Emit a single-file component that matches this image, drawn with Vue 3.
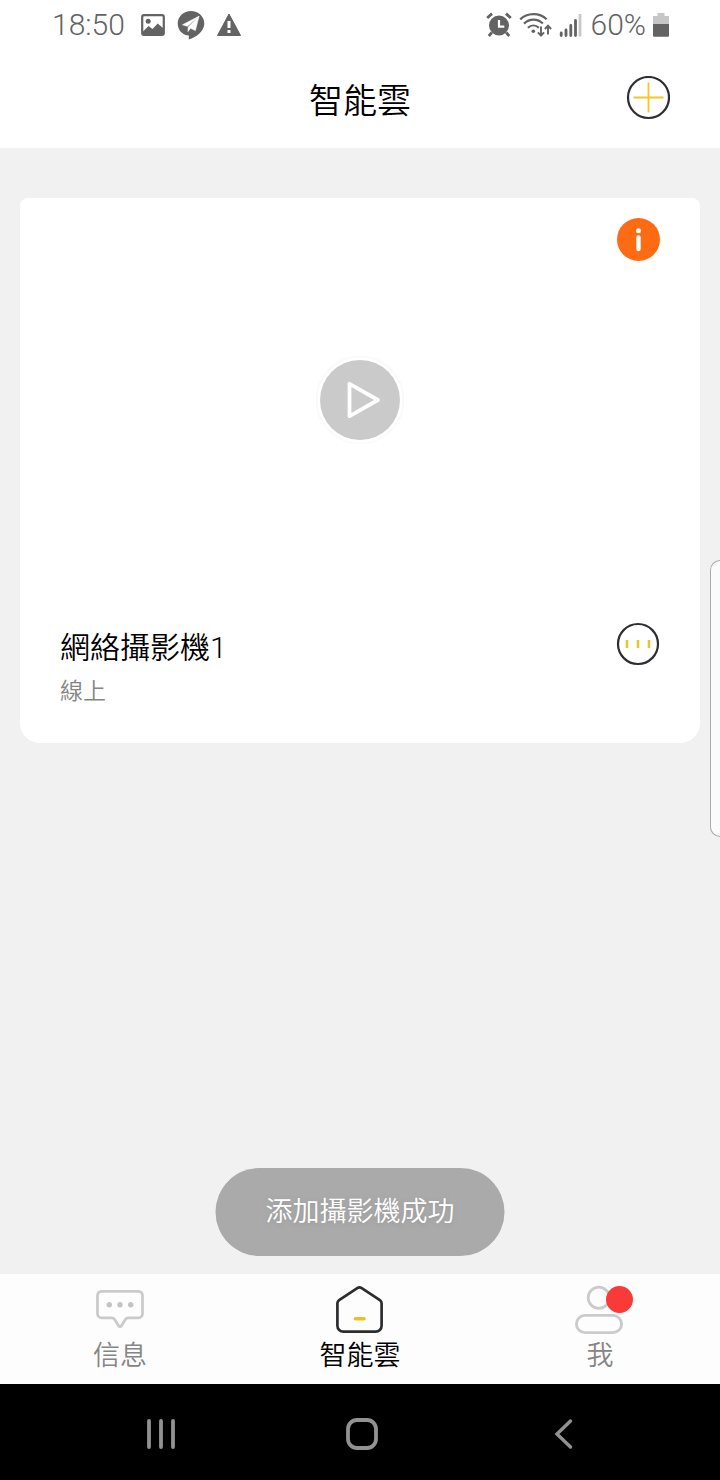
<script setup>
import { ref } from 'vue'

const cameras = ref([{ id: 1, name: '網絡攝影機1', status: '線上' }])
const active = ref('home')
const tabs = [
  { id: 'messages', label: '信息' },
  { id: 'home', label: '智能雲' },
  { id: 'me', label: '我' }
]
</script>

<template>
  <div class="screen">
    <div class="status-bar">
      <div class="status-group">
        <span class="status-text">18:50</span>
        <svg class="picture" width="24" height="22" viewBox="0 0 24 22" aria-hidden="true">
          <rect x="1.2" y="1.2" width="21.6" height="19.6" rx="1.8" fill="none" stroke="#636363" stroke-width="2.2" />
          <circle cx="7.2" cy="7.3" r="2.5" fill="#636363" />
          <path d="M2 17.5 7.5 12l4 3 5.2-5.4L22 14v7H2z" fill="#636363" />
        </svg>
        <svg width="28" height="30" viewBox="0 0 28 30" aria-hidden="true">
          <path d="M14 1C6.8 1 .7 6.4.7 13.4c0 6.600 5 11.700 11.100 12.200v3.800c7.800-2.300 15.500-8.500 15.500-16C27.300 6.400 21.200 1 14 1z" fill="#636363" />
          <path d="M22 6.200 5.500 14.800l4.800 1.500zM22 6.200 11.300 17l-.4 4.600 2.700-3.300 4.800 2.200z" fill="#fff" stroke="#fff" stroke-width=".6" />
        </svg>
        <svg width="26" height="24" viewBox="0 0 26 24" aria-hidden="true">
          <path d="M12 1 23.500 22.500h-23z" fill="#636363" stroke="#636363" stroke-width="1" stroke-linejoin="round" />
          <path d="M10.500 8h3v7h-3zM10.500 17h3v3h-3z" fill="#fff" />
        </svg>
      </div>
      <div class="status-group right">
        <svg width="26" height="26" viewBox="0 0 26 26" aria-hidden="true">
          <circle cx="13" cy="13.500" r="10" fill="#636363" />
          <path d="M1.200 6 6 1.600M24.800 6 20 1.600" stroke="#636363" stroke-width="2.800" />
          <path d="m5.800 20.500-3 3.500M20.200 20.500l3 3.500" stroke="#636363" stroke-width="2.800" />
          <path d="M13 8v6.600h5.300" fill="none" stroke="#fff" stroke-width="2.200" />
        </svg>
        <svg width="33" height="26" viewBox="0 0 33 26" aria-hidden="true">
          <g fill="none" stroke="#636363" stroke-width="2.200">
            <path d="M1.200 7.400C8 .6 20.500.3 27.600 7.300" />
            <path d="M5 11.600C10.500 6.300 18.500 6.200 23.900 11.500" />
            <path d="M8.900 15.800c3.300-3.100 7.700-3.100 11 0" />
          </g>
          <circle cx="14.300" cy="19.200" r="1.800" fill="#636363" />
          <path d="M22 14.500v9M18.900 20.300l3.100 3.300 3.100-3.300M29 22.500v-8.800M25.900 17l3.100-3.300 3.100 3.300" fill="none" stroke="#636363" stroke-width="1.900" />
        </svg>
        <svg width="23" height="26" viewBox="0 0 23 26" aria-hidden="true">
          <path d="M2.200 21v2.600M7 18v5.600M11.800 13.500v10.100M16.500 8.500v15.100" stroke="#636363" stroke-width="2.800" stroke-linecap="round" />
          <path d="M21 2v22.500" stroke="#c8c8c8" stroke-width="2.800" />
        </svg>
        <span class="status-text battery-level">60%</span>
        <svg width="16" height="24" viewBox="0 0 16 24" aria-hidden="true">
          <path d="M4.500 0h7v3H16v9H0V3h4.500z" fill="#c6c6c6" />
          <path d="M0 11h16v11.500a1.200 1.200 0 0 1-1.200 1.200H1.200A1.200 1.200 0 0 1 0 22.500z" fill="#636363" />
        </svg>
      </div>
    </div>

    <header class="header">
      <h1>智能雲</h1>
      <button class="icon-button" type="button" aria-label="新增裝置">
        <svg width="44" height="44" viewBox="0 0 44 44">
          <circle cx="22.500" cy="21.500" r="20.500" fill="none" stroke="#2e2e33" stroke-width="2.200" />
          <path d="M7.500 21.500h30M22.500 6.500v30" stroke="#f0c929" stroke-width="1.800" />
        </svg>
      </button>
    </header>

    <main class="content">
      <article v-for="camera in cameras" :key="camera.id" class="card">
        <div class="preview">
          <button class="icon-button info" type="button" aria-label="裝置資訊">
            <svg width="44" height="44" viewBox="0 0 44 44">
              <circle cx="22.500" cy="21.500" r="21.500" fill="#ff6b12" />
              <circle cx="22.500" cy="12.800" r="2.500" fill="#fff" />
              <path d="M22.500 19.500v11.500" stroke="#fff" stroke-width="4.400" stroke-linecap="round" />
            </svg>
          </button>
          <button class="icon-button" type="button" aria-label="播放">
            <svg width="90" height="90" viewBox="0 0 90 90">
              <circle cx="45" cy="45" r="43.500" fill="#fff" stroke="#f9f9f9" stroke-width="1.500" />
              <circle cx="45" cy="45" r="40" fill="#cacaca" />
              <path d="M34.500 28.800v32.400L63 45z" fill="none" stroke="#fff" stroke-width="3.800" stroke-linejoin="round" />
            </svg>
          </button>
        </div>
        <div class="details">
          <div>
            <h2>{{ camera.name }}</h2>
            <p>{{ camera.status }}</p>
          </div>
          <button class="icon-button" type="button" aria-label="更多">
            <svg width="44" height="44" viewBox="0 0 44 44">
              <circle cx="22" cy="22" r="20" fill="none" stroke="#2e2e33" stroke-width="2.200" />
              <path d="M11 18v8M22 18v8M33 18v8" stroke="#e6c72c" stroke-width="2.600" />
            </svg>
          </button>
        </div>
      </article>
      <div class="toast" role="status">添加攝影機成功</div>
    </main>

    <nav class="tabs">
      <button
        v-for="tab in tabs"
        :key="tab.id"
        type="button"
        class="tab"
        :class="{ active: active === tab.id }"
        @click="active = tab.id"
      >
        <svg v-if="tab.id === 'messages'" width="48" height="48" viewBox="0 0 48 48" fill="none" aria-hidden="true">
          <path d="M5.500 5.300h37a4 4 0 0 1 4 4v18.500a4 4 0 0 1-4 4H32.300c-1.500 0-2.200.6-3 1.800l-4 6.400a1.600 1.600 0 0 1-2.600 0l-4-6.400c-.8-1.200-1.500-1.800-3-1.800H5.500a4 4 0 0 1-4-4V9.300a4 4 0 0 1 4-4z" stroke="#cbcbcb" stroke-width="2.800" />
          <g fill="#c4c4c4">
            <circle cx="13.300" cy="18.800" r="2.700" />
            <circle cx="24" cy="18.800" r="2.700" />
            <circle cx="34.700" cy="18.800" r="2.700" />
          </g>
        </svg>
        <svg v-else-if="tab.id === 'home'" width="48" height="48" viewBox="0 0 48 48" fill="none" aria-hidden="true">
          <path d="M21.300 2.100a4 4 0 0 1 4.400 0l18.200 12a4 4 0 0 1 1.700 3.300v22.300a6 6 0 0 1-6 6H7.400a6 6 0 0 1-6-6V17.400a4 4 0 0 1 1.700-3.300z" stroke="#2d2d30" stroke-width="2.700" />
          <path d="M19.500 32.700h8.500" stroke="#f2bd24" stroke-width="3.600" stroke-linecap="round" />
        </svg>
        <svg v-else width="60" height="48" viewBox="0 0 60 48" fill="none" overflow="visible" aria-hidden="true">
          <g stroke="#cbcbcb" stroke-width="2.800">
            <circle cx="28.800" cy="11.700" r="10.600" />
            <rect x="6.400" y="29.400" width="45.200" height="17.200" rx="8.600" />
          </g>
          <circle cx="49.500" cy="13.500" r="13.500" fill="#f93a37" />
        </svg>
        <span>{{ tab.label }}</span>
      </button>
    </nav>

    <div class="system-nav">
      <button class="icon-button" type="button" aria-label="最近使用">
        <svg width="32" height="34" viewBox="0 0 32 34">
          <path d="M4 4v26M16 4v26M28 4v26" stroke="#929292" stroke-width="3.800" stroke-linecap="round" />
        </svg>
      </button>
      <button class="icon-button" type="button" aria-label="主畫面">
        <svg width="34" height="34" viewBox="0 0 34 34">
          <rect x="3" y="3" width="28" height="28" rx="9" fill="none" stroke="#929292" stroke-width="3.800" />
        </svg>
      </button>
      <button class="icon-button" type="button" aria-label="返回">
        <svg width="20" height="34" viewBox="0 0 20 34">
          <path d="M17.500 4 4 17l13.500 13" fill="none" stroke="#929292" stroke-width="3.400" stroke-linecap="round" />
        </svg>
      </button>
    </div>

    <div class="edge-handle"></div>
  </div>
</template>

<style scoped>
.screen {
  position: relative;
  display: flex;
  flex-direction: column;
  min-height: 100vh;
  overflow: hidden;
  background: #f1f1f1;
  color: #000;
  font-family: Roboto, "Noto Sans CJK TC", sans-serif;
  font-weight: 350;
}

h1,
h2,
p {
  margin: 0;
  font-weight: 350;
}

svg {
  display: block;
  flex: none;
}

button {
  padding: 0;
  border: 0;
  background: none;
  color: inherit;
  font: inherit;
  cursor: pointer;
}

.icon-button {
  display: block;
}

.status-bar {
  display: flex;
  justify-content: space-between;
  align-items: center;
  height: 50px;
  padding: 0 51px 0 52px;
  background: #fff;
  color: #636363;
}

.status-group {
  display: flex;
  align-items: center;
  gap: 12px;
}

.status-group.right {
  gap: 7px;
}

.status-group svg {
  margin-bottom: 1px;
}

.status-group .picture {
  margin-left: 4px;
}

.status-text {
  font-size: 30px;
  line-height: 50px;
}

.battery-level {
  padding-left: 2px;
}

.header {
  display: grid;
  grid-template-columns: 1fr auto 1fr;
  align-items: center;
  height: 98px;
  padding: 0 50px 3px;
  box-sizing: border-box;
  background: #fff;
}

.header h1 {
  grid-column: 2;
  padding-top: 6px;
  font-size: 34px;
  line-height: 50px;
}

.header .icon-button {
  justify-self: end;
}

.content {
  position: relative;
  flex: 1;
  padding: 50px 20px 18px;
}

.card {
  border-radius: 8px 8px 20px 20px;
  background: #fff;
}

.preview {
  position: relative;
  display: grid;
  place-items: center;
  height: 404px;
}

.info {
  position: absolute;
  top: 20px;
  right: 40px;
}

.details {
  display: flex;
  justify-content: space-between;
  align-items: flex-start;
  padding: 20px 40px 29px;
}

.details h2 {
  padding-top: 4px;
  font-size: 30px;
  line-height: 44px;
}

.details p {
  color: #858585;
  font-size: 23px;
  line-height: 44px;
}

.toast {
  position: absolute;
  bottom: 18px;
  left: 50%;
  padding: 24px 50px;
  border-radius: 44px;
  background: #aaa;
  color: #fff;
  font-size: 27px;
  line-height: 40px;
  white-space: nowrap;
  text-shadow: 0 1px 4px #8888;
  transform: translateX(-50%);
}

.tabs {
  display: grid;
  grid-template-columns: repeat(3, 1fr);
  background: #fdfdfd;
}

.tab {
  display: flex;
  flex-direction: column;
  align-items: center;
  gap: 2px;
  padding: 12px 0 8px;
  color: #858585;
  font-size: 27px;
  line-height: 40px;
}

.tab.active {
  color: #000;
}

.system-nav {
  display: grid;
  grid-template-columns: repeat(3, 1fr);
  place-items: center;
  height: 96px;
  padding: 4px 57px 0 60px;
  box-sizing: border-box;
  background: #000;
}

.edge-handle {
  position: absolute;
  top: 560px;
  right: 0;
  width: 10px;
  height: 277px;
  box-sizing: border-box;
  border: 1px solid #aaa;
  border-right: 0;
  border-radius: 12px 0 0 12px;
  background: #fbfbfb;
}
</style>

<style>
body {
  margin: 0;
}
</style>
